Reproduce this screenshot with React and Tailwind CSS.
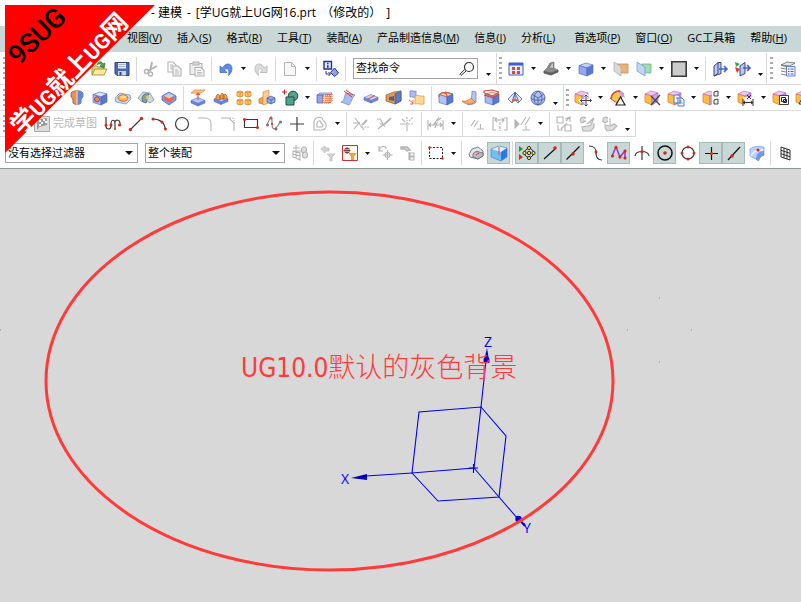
import React from 'react';

const MENUS = [
  ['视图', 'V'], ['插入', 'S'], ['格式', 'R'], ['工具', 'T'], ['装配', 'A'], ['产品制造信息', 'M'],
  ['信息', 'I'], ['分析', 'L'], ['首选项', 'P'], ['窗口', 'O'], ['GC工具箱', ''], ['帮助', 'H'],
];

const Cube = ({ top = '#c3d2fa', left = '#8fa8f0', right = '#5a78d0', line = '#4a62b0' }) => (
  <g stroke={line} strokeWidth=".6" strokeLinejoin="round">
    <path d="M1 4.500 8 2l7 2-6 3z" fill={top} />
    <path d="M1 4.500 9 7v8l-8-2.500z" fill={left} />
    <path d="M9 7l6-3v8l-6 3z" fill={right} />
  </g>
);

const SyncCube = () => (
  <g strokeLinejoin="round" strokeWidth=".7">
    <path d="M0 4 6 1l7 2-6 3z" fill="#eec4f5" stroke="#b27cc4" />
    <path d="M0 4l7 2v9l-7-3z" fill="#ffbe3c" stroke="#dd6a45" />
    <path d="M7 6l6-3v8l-6 4z" fill="#d3a0e6" stroke="#a06bb8" />
  </g>
);

const Slab = ({ y = 0, fill = '#b4c6f8' }) => (
  <g transform={`translate(0 ${y})`} stroke="#5870c4" strokeWidth=".6" strokeLinejoin="round">
    <path d="M1 9l7-3 7 3-7 3z" fill={fill} />
    <path d="M1 9v2.500l7 3V12zM15 9v2.500l-7 3V12z" fill="#6a86de" />
  </g>
);

const Dot = ({ x, y, r = 1.5 }) => <circle cx={x} cy={y} r={r} fill="#d6261c" stroke="none" />;

const ink = { fill: 'none', stroke: '#3c3c3c', strokeWidth: 1.2 };
const dim = { fill: 'none', stroke: '#b4b4b4', strokeWidth: 1.1 };

const ICONS = {
  open: <g stroke="#8d8334" strokeWidth=".8"><path d="M1 14V5h5l1 1h6v3" fill="#e6d66d" /><path d="M1 14 4 8h12l-3 6z" fill="#f8ec9c" /><path d="M6 4c1-4 5-4 6-1l2-1-1 5-4-2 1.500-1C10 2.500 8 2 6 4z" fill="#45a845" stroke="#2d7b2d" /></g>,
  save: <g><path d="M1 1.500h14v13H3l-2-2z" fill="#4a68b0" stroke="#2f4580" /><path d="M4 2h8v5.500H4z" fill="#e9edf5" /><path d="M4.500 3.500h7M4.500 5.500h7" stroke="#9aa6bf" strokeWidth=".8" /><path d="M4 10h8v4.500H4z" fill="#cfd5e0" /><path d="M5.500 11h2v3.500h-2z" fill="#2f4580" /></g>,
  cut: <g {...dim}><path d="M9 1 7 10M14 5 5 10" strokeWidth="2" /><circle cx="3.500" cy="10.500" r="2" strokeWidth="1.500" /><circle cx="7.500" cy="13" r="2" strokeWidth="1.500" /></g>,
  copy: <g {...dim}><path d="M2 1h5l3 3v7H2zM4 4h3M4 6h3M4 8h3" /><path d="M7 5h5l3 3v7H7z" fill="#f1f1f1" /><path d="M9 9h3M9 11h4M9 13h4" strokeWidth=".9" /></g>,
  paste: <g {...dim}><path d="M1 2.500h12v11H1z" fill="#eee" /><path d="M4 1h6v3H4z" fill="#d7d7d7" /><path d="M6 6.500h6l3 3V15H6z" fill="#f7f7f7" /><path d="M8 9.500h4M8 11.500h5M8 13h5" strokeWidth=".9" /></g>,
  undo: <path d="M2 5v6.500h7L6.500 9C9 6.500 12 7.500 10.500 14.500c5-4 4.500-11.500-.5-11.500C7.500 3 6 4.500 4.500 7z" fill="#5d8ce0" stroke="#3b66b8" strokeWidth=".7" />,
  redo: <path d="M14 5v6.500H7L9.500 9C7 6.500 4 7.500 5.500 14.500.5 10.500 1 3 6 3c2.500 0 4 1.500 5.500 4z" fill="#dcdcdc" stroke="#b9b9b9" strokeWidth=".9" />,
  doc: <path d="M2.500 1.500h7l4 4v9h-11zM9.500 1.500v4h4" fill="#f8f8f8" stroke="#b4b4b4" />,
  pick: <g><path d="M1 .5h7.500V8H1z" fill="#dfe6ff" stroke="#26328c" strokeWidth="1.400" /><path d="M4.800 2v1.300M4.800 4.200v2.600" stroke="#26328c" strokeWidth="1.600" /><path d="M3 10v3h4M5.500 11 7.500 13l-2 2" fill="none" stroke="#26328c" /><path d="M11.500 7l4 5-4 3.500-4-4z" fill="#8fa2e8" stroke="#26328c" /></g>,
  win: <g><path d="M1 2h14v12H1z" fill="#e9effc" stroke="#3d5fc4" /><path d="M1 2h14v2.500H1z" fill="#3560d8" /><path d="M4 6h3v3H4zM9 6h3v3H9zM4 10h3v3H4zM9 10h3v3H9z" fill="#e8452f" /></g>,
  shadow: <g stroke="#666" strokeWidth=".6"><path d="M1 10l3-3 3-5 4-1v6l4 2v2l-7 3-7-2z" fill="#8d8d8d" /><path d="M1 10l7 2 7-3v2l-7 3-7-2z" fill="#5e5e5e" /><path d="M6 7l3-5 1.500-.5v6z" fill="#c6c6c6" /></g>,
  cube: <Cube />,
  orange: <g strokeWidth=".8"><path d="M3 3h12v9H6z" fill="#e9b277" stroke="#c68d50" /><path d="M1 1l7 5v9l-7-5z" fill="#d9d9d9" stroke="#b0b0b0" /></g>,
  teal: <g strokeWidth=".8"><path d="M6 3h9v9H8z" fill="#a2dbb4" stroke="#6cb684" /><path d="M1 1l8 5v9l-8-5z" fill="#c0d3f2" stroke="#7f99cf" /></g>,
  square: <path d="M.8.8h14.400v14.400H.8z" fill="#cbcbcb" stroke="#3b3b3b" strokeWidth="1.600" />,
  clipA: <g><path d="M2 5l4-3.500v11L2 15zM6 1.500h3v11L2 15" fill="#b9c8f4" stroke="#3a4878" /><path d="M7 8h8M12 5l3 3-3 3" fill="none" stroke="#3c5fdc" strokeWidth="1.600" /></g>,
  clipB: <g><path d="M5 5l5-3.500v11L5 15z" fill="#b9c8f4" stroke="#3a4878" /><path d="M0 1l5 2-4 3z" fill="#2da84e" /><path d="M0 6l5 2-3 4z" fill="#d93b2a" /><path d="M8 7h7M12 4l3 3-3 3" fill="none" stroke="#3c5fdc" strokeWidth="1.600" /></g>,
  layers: <g strokeWidth=".8"><path d="M1 4l6-3 8 1-5 3zM1 7l5 1M1 10l5 1M1 13l5 1M1 4v0l6 2" fill="#dfeae2" stroke="#5b6b63" /><path d="M6.500 5.500h8.500v9.500H6.500z" fill="#eef2ff" stroke="#4a63c8" /><path d="M8 8h1.500M10.500 8h3M8 10.500h1.500M10.500 10.500h3M8 13h1.500M10.500 13h3" stroke="#4a63c8" strokeWidth="1.200" /></g>,

  revolve: <g><path d="M2 3c2-3 10-3 12 0v4c-2 1-2 3-2 6-2 2-6 2-8 0 0-3 0-5-2-6z" fill="#ea9050" stroke="#8a5a44" strokeWidth=".8" /><path d="M8 1v13.500c3 0 4-1.500 4-1.500 0-3 0-5 2-6V3C12 1 8 1 8 1z" fill="#6386dc" /><path d="M8 1v14" stroke="#fff" strokeWidth=".8" /></g>,
  hole: <g><Cube top="#dbe4ff" left="#a5b6f5" /><circle cx="5" cy="9.300" r="2.500" fill="#e98a60" stroke="#7d3a30" strokeWidth=".8" /></g>,
  boss: <g><path d="M0 8l5-5 10 2 1 4-5 5-10-2z" fill="#c5d9f7" stroke="#6e95d3" strokeWidth=".8" /><ellipse cx="8" cy="8" rx="5" ry="3.200" fill="#ffb24a" stroke="#d86f21" /><ellipse cx="8" cy="7" rx="3" ry="1.500" fill="#ffd896" /></g>,
  rib: <g strokeWidth=".8"><path d="M0 8 5 2l7 1 4 7-4 3-4-3-4 2z" fill="#cdd8e4" stroke="#8095a8" /><path d="M4 9c0-4 3-6 7-5L8 13l-3-1z" fill="#8a9ea0" stroke="#4c6365" /><path d="M8 6l3-1-2 6z" fill="#f0d25b" /></g>,
  pocket: <g><path d="M1 6l7-4 7 4v4l-7 5-7-5z" fill="#7f9bec" stroke="#415cac" strokeWidth=".7" /><path d="M3 5.500 8 3l5 2.500-5 4z" fill="#b9caf8" /><path d="M3 6.500l5 2 5-2v3l-5 3-5-3z" fill="#ef673b" /><path d="M5 6l3 1.500L11 6 8 4.500z" fill="#f9c9a4" /></g>,
  extrude: <g><Slab y={1.5} /><path d="M1 3l4-3h10l-4 3z" fill="#ffc98a" stroke="#d18235" strokeWidth=".7" /><path d="M8 3v7M6 5l2-2 2 2" fill="none" stroke="#e0603a" strokeWidth="1.200" /></g>,
  emboss: <g><Slab y={0} /><path d="M3 9V6l2-2 2 2v4zM7 9V6l2-3 2 2v4zM10 9V5l2-1 2 2v3z" fill="#f4a244" stroke="#a95b20" strokeWidth=".7" /></g>,
  pattern: <g fill="#ffc65e" stroke="#d98a30" strokeWidth=".8"><path d="M1 2l3-1 3 1v4L4 7 1 6zM9 2l3-1 3 1v4l-3 1-3-1zM1 10l3-1 3 1v4l-3 1-3-1zM9 10l3-1 3 1v4l-3 1-3-1z" /><path d="M1 2l3 1 3-1M4 3v4M9 2l3 1 3-1M12 3v4M1 10l3 1 3-1M4 11v4M9 10l3 1 3-1M12 11v4" /></g>,
  mirror: <g strokeWidth=".7"><path d="M0 9l4-2 3 1v4l-3 2-4-1z" fill="#efa755" stroke="#b6692a" /><path d="M4 2l6-2v13l-6 2z" fill="#f9cd91" stroke="#d28a3d" /><path d="M8 8l4-2 4 2v4l-4 2-4-2z" fill="#8fa8f0" stroke="#4058a6" /><path d="M8 8l4 2 4-2M12 10v4" fill="none" stroke="#4058a6" /></g>,
  unite: <g><circle cx="11" cy="6" r="4.800" fill="#4fa48f" stroke="#24483f" /><path d="M4 7h8v8H4z" fill="#4fa48f" stroke="#24483f" /><path d="M0 2h5M2.500-.5v5" stroke="#d6261c" strokeWidth="1.200" /></g>,
  trim: <g><path d="M0 5l3-2h12l-2 2z" fill="#cdd8fb" stroke="#6d78b5" strokeWidth=".7" /><path d="M0 5h6v8H0z" fill="#8fa6f0" stroke="#45569d" strokeWidth=".7" /><path d="M6 5h7v8H6zM13 5l2-2v8l-2 2z" fill="#f6d08c" stroke="#d64a37" strokeDasharray="1 1" /><path d="M9 4v9M11 4v9" stroke="#d64a37" strokeDasharray="1 1" /></g>,
  split: <g><path d="M1 12c4-1 3-6 5-9l9 2c-3 2-3 7-6 10z" fill="#aabdf2" stroke="#6d82c0" strokeWidth=".7" /><path d="M4 1l8 6M6 0l7 5" stroke="#d7352c" /></g>,
  face: <g><Slab y={-1.5} fill="#ccd8fc" /><path d="M5 9l7-3.500" stroke="#e0554a" strokeWidth="1.200" /></g>,
  shell: <g><path d="M0 5l8-3 7-1v10l-6 3-9-3z" fill="#e29b55" stroke="#8d5a30" strokeWidth=".7" /><path d="M9 4l6-3v10l-6 3z" fill="#5d7cc0" stroke="#3d5594" strokeWidth=".7" /><path d="M3 7l5-1v5l-5-1z" fill="#5b5f7c" /></g>,
  offset: <g strokeWidth=".8"><path d="M1 1c2-1 4 1 6 0v6c-2 1-4-1-6 0z" fill="#a9bcf4" stroke="#6d82c0" /><path d="M6 6c3-2 6 1 9 0v8c-3 1-6-1-9 0z" fill="#ffd796" stroke="#d99a40" /><path d="M0 10l4 3M4 10v4H1" fill="none" stroke="#d44830" /></g>,
  blend: <g><Cube top="#ffd891" left="#b4c4f6" /><path d="M1 7V5c3-4 8-3 8 2" fill="none" stroke="#df4d35" strokeWidth="1.200" /><path d="M7 2l7 2" stroke="#df4d35" /></g>,
  sweep: <g strokeWidth=".7"><path d="M11 1l4 1v10c-3 3-6 3-9 2 4-3 5-7 5-13z" fill="#b3c4f2" stroke="#6d7fb9" /><path d="M1 11c4 1 7-1 9-3l4 4c-4 3-9 3-13-1z" fill="#f6b068" stroke="#c3622a" /></g>,
  chamfer: <g><Cube top="#ffe095" left="#a5b8f4" /><path d="M0 3l9 3 6-4M0 5l9 3 6-4M0 3V1l8-1 7 2" fill="none" stroke="#dd4632" strokeWidth="1.100" /></g>,
  draft: <g fill="none"><path d="M8 2 1 9l4 4 3-3 3 3 4-4z" fill="#e2ebfc" stroke="#5474be" strokeWidth=".9" /><path d="M8 2v9M8 3 5 12M8 3l4 9" stroke="#3c4b7d" strokeWidth=".8" /><path d="M5 10h6" stroke="#dc5b37" strokeWidth="1.600" /></g>,
  sphere: <g fill="none" stroke="#3c579c" strokeWidth=".8"><circle cx="8" cy="8" r="7" fill="#aebff0" /><path d="M8 8v7M2.500 4.500 8 8l5.500-3.500M8 1C5 3 4 6 4 9s2 5 4 6M8 1c3 2 4 5 4 8s-2 5-4 6M1 8c2 3 12 3 14 0" /></g>,

  move: <g><SyncCube /><path d="M11 5v11M5.500 10.500h11M9.500 6.500 11 5l1.500 1.500M9.500 14.500 11 16l1.500-1.500M7 9l-1.500 1.500L7 12M15 9l1.500 1.500L15 12" fill="none" stroke="#fff" strokeWidth="3" /><path d="M11 5v11M5.500 10.500h11M9.500 6.500 11 5l1.500 1.500M9.500 14.500 11 16l1.500-1.500M7 9l-1.500 1.500L7 12M15 9l1.500 1.500L15 12" fill="none" stroke="#444" /></g>,
  pull: <g><path d="M1 9c0-5 4-8 9-8l4 3-7 9z" fill="#ffc84a" stroke="#cc493b" /><path d="M8 1l5 1 2 6-5-3z" fill="#d49ae5" /><path d="M1 9c0-5 4-8 9-8" fill="none" stroke="#cc493b" strokeWidth="1.500" /><path d="M10.500 7l4.500 8H6z" fill="#fff" stroke="#222" strokeWidth="1.200" /></g>,
  del: <g><SyncCube /><path d="M6 6l9 9M15 5 6 15" stroke="#444" strokeWidth="1.300" /></g>,
  syncCopy: <g><SyncCube /><path d="M6 5h5l1 2v6H6zM10 8h4l2 2v6h-6z" fill="#f1f5ff" stroke="#5c7bc0" /><path d="M8 8h2M11.500 11h2M11.500 13h3" stroke="#3c5796" strokeWidth=".8" /></g>,
  groupFace: <g><SyncCube /><path d="M9 0h7v16H9z" fill="#fff" /><path d="M11 2l4-1v5h-4zM11 10l4-1v5h-4z" fill="#f2f2f2" stroke="#444" /></g>,
  dimension: <g><SyncCube /><path d="M5 7h11v9H5z" fill="#fff" fillOpacity=".8" /><path d="M5 9v7M15 9v7M5 12.500h10M7 11 5 12.500 7 14M13 11l2 1.500-2 1.500M9 5l4 4M13 5 9 9" fill="none" stroke="#333" /></g>,
  groupBox: <g><SyncCube /><path d="M6.500 5.500h9v9h-9z" fill="#f7f7ff" stroke="#444" /><path d="M8.500 7.500h4v4h-4zM10.500 9.500h3v3h-3z" fill="none" stroke="#223" /></g>,
  cross: <g><SyncCube /><path d="M8 5l6 9H3z" fill="#fff" stroke="#333" /></g>,

  profile: <g {...ink}><path d="M1 1v9c0 4 5 4 5 0V8c0-5 4-5 4 0v5M10 6c1-3 5-2 5 1v3" /><Dot x={1} y={9} /><Dot x={6} y={9} /><Dot x={10} y={13} r={1} /><Dot x={14.500} y={9} /></g>,
  line: <g {...ink}><path d="M3 13 13 3" /><Dot x={2.500} y={13.500} r={1.7} /><Dot x={13.500} y={2.500} r={1.700} /></g>,
  arc: <g {...ink}><path d="M2 3c7 0 12 4 12 10" /><Dot x={2} y={3} /><Dot x={11} y={6} /><Dot x={14.500} y={13} /></g>,
  circle: <circle cx="8" cy="8" r="6.500" {...ink} />,
  fillet: <path d="M1 2h7c5 0 6 3 6 6v7" {...dim} />,
  corner: <g {...dim}><path d="M1 2h8l5 5v8" /><path d="M10 2h4v5" strokeDasharray="1 1" /></g>,
  rect: <g {...ink}><path d="M1.500 3.500h13v8h-13z" /><Dot x={1.500} y={3.500} /><Dot x={14.500} y={11.500} /></g>,
  spline: <g fill="none" stroke="#888" strokeWidth="1.200"><path d="M1 9C5-1 6-1 6 7s3 8 8-1" /><g fill="#a06060" stroke="none"><circle cx="1.500" cy="9" r="1.500" /><circle cx="5" cy="2" r="1.500" /><circle cx="10" cy="13" r="1.500" /><circle cx="14.500" cy="6" r="1.500" /></g><Dot x={6} y={8} r={1} /></g>,
  point: <path d="M8 1v14M1 8h14" {...ink} />,
  offsetCurve: <g {...dim}><path d="M2 14V6c1-6 8-6 9-2l3 4c1 3-1 6-4 6z" /><path d="M5 11V7c1-3 4-3 4 0l2 2c0 2-1 2-2 2z" /></g>,
  trimA: <g {...dim}><path d="M2 2l9 12M1 13 7 6M0 7h6" /><path d="M9 9l5-5" strokeWidth="2" /><path d="M8 11h8" strokeDasharray="2 1" /></g>,
  trimB: <g {...dim}><path d="M1 3h3l5 8M2 13 14 3M4 8h6" /><path d="M10 7l5-5" strokeWidth="1.600" /></g>,
  trimC: <g {...dim}><path d="M8 6v9M1 8h7M3 3l3 3" /><path d="M9 8h6M8 1v4M10 5l4-4" strokeDasharray="2 1" /></g>,
  dimQ: <g {...dim}><path d="M0 4v10M15 4v10M0 9h15M3 7 1 9l2 2M12 7l2 2-2 2M7 12l2-5-3 1 5-7M9 5l4-3" /></g>,
  constrain: <g {...dim}><path d="M2 10l4-6M5 11l4-6M8 13h7M11.500 13V8" /></g>,
  autoC: <g {...dim}><path d="M4 2H1v12h3M12 2h3v12h-3" /><path d="M8 6v9" strokeDasharray="3 1" /><path d="M3 4h9M5 2 3 4l2 2M10 2l2 2-2 2" /></g>,
  showC: <g {...dim}><path d="M0 4l4 4-4 4z" fill="#b4b4b4" /><path d="M6 9l5-8M10 9l5-8M7 14h8M11 14v-4" /></g>,
  box1: <g {...dim}><path d="M1 1h6v6H1zM9 9h6v6H9z" /><path d="M5 13l6-6M9 3l5-2v5M2 9v5h5M10 5l4-4" /></g>,
  box2: <g {...dim}><path d="M7 2C2-1-1 5 3 7l4-2H4M8 8l7-6-3 7-3 1-6 1 1 4h8l3-4V7" fill="#ddd" /></g>,
  box3: <g {...dim}><path d="M6 2C1-1-1 5 3 7l3-2M8 2v7M3 9l5 1 4-2 3 2-4 4-6 1-2-3z" fill="#ddd" /></g>,
  finish: <g><path d="M.5.5h15v15H.5z" fill="#ddd" stroke="#aaa" /><path d="M3 4l10-2v7L5 11l-2 3z" fill="#999" /><path d="M5 4h2v2H5zM9 3h2v2H9zM7 6h2v2H7zM11 5h2v2h-2zM5 8h2v2H5z" fill="#fff" /></g>,

  assy: <g {...dim}><path d="M1 6h8M1 6v6l7 3V8L1 6M4 7v6M1 9l7 2M4 0v5M1 3h7" /><ellipse cx="12" cy="5" rx="2.500" ry="3" fill="#e2e2e2" /><ellipse cx="13" cy="10" rx="2.500" ry="3" fill="#e2e2e2" /></g>,
  filterOff: <g fill="#d2d2d2" stroke="#c0c0c0" strokeWidth=".8"><path d="M1 4l4-3v2h4v3H5v2zM7 9h8l-3 3v4h-2v-4z" /></g>,
  filter: <g><path d="M.5.5h15v15H.5z" fill="#fff8ec" stroke="#c9303e" /><path d="M5 2v7M1.500 5.500h7M3 3.500h4v4H3z" fill="none" stroke="#673b3b" strokeWidth=".9" /><path d="M7 8.500h7l-2.500 3v3h-2v-3z" fill="#f3aa2e" stroke="#cb7b19" strokeWidth=".6" /></g>,
  reset: <g {...dim}><path d="M2 1v5h4M2 5c2-5 7-4 7-1M10.500 5v10M5.500 10h10" /><circle cx="10.500" cy="10" r="2.500" /></g>,
  tree: <g {...dim}><path d="M1 2h6l3 3-3 1-2-2H1z" fill="#d6d6d6" strokeWidth="1.500" /><path d="M9 7v8M10 8h4v3h-4zM10 12h4v3h-4z" /></g>,
  marquee: <g><path d="M1.500 2.500h13v11h-13z" fill="none" stroke="#222" strokeDasharray="2 1.500" strokeWidth="1.100" /><Dot x={1.500} y={2.500} r={1.2} /><Dot x={14.500} y={13.500} r={1.2} /></g>,
  ghost: <g stroke="#666" strokeWidth=".8"><path d="M1 9l3-5 6-2 5 4v5l-5 3-8-2z" fill="#e2e2ea" /><path d="M5 12c-1-4 3-7 6-5l4 1v3l-5 3z" fill="#b9b9c4" /><path d="M8 10l3-2" stroke="#c22" /></g>,
  shade: <g><path d="M0 4l8-3 8 2-6 4z" fill="#d9efff" /><path d="M0 4l10 3v9L0 12z" fill="#6cc0f8" /><path d="M10 7l6-4v9l-6 4z" fill="#2a78e4" /><path d="M0 4l8-3 8 2v9l-6 4L0 12z" fill="none" stroke="#5a80c8" strokeWidth=".7" /><path d="M8 2v8" stroke="#e34c3a" /></g>,

  snap: <g><circle cx="10" cy="8" r="4.500" fill="none" stroke="#222" /><path d="M0 1l4 3-4 3z" fill="#199a34" /><path d="M0 9l4 3-4 3z" fill="#d6261c" /><g fill="#ffe04a" stroke="#222" strokeWidth=".9"><circle cx="10" cy="8" r="1.700" fill="#ffd42e" /><circle cx="10" cy="3" r="1.600" /><circle cx="10" cy="13" r="1.600" /><circle cx="5.500" cy="8" r="1.600" /><circle cx="14.500" cy="8" r="1.600" /></g></g>,
  endPt: <g {...ink} stroke="#111"><path d="M2 14 13 4" /><Dot x={13} y={3} r={1.800} /></g>,
  midPt: <g {...ink} stroke="#111"><path d="M1.500 14.500l13-13" /><Dot x={8} y={9} r={1.800} /></g>,
  ctrlPt: <g {...ink}><path d="M1 1c6 0 7 3 7 7s2 7 6 7" /><Dot x={8} y={7} /></g>,
  poly: <g fill="none"><path d="M1 11 5 2l4 10 5-6v7" stroke="#8f36cf" strokeWidth="1.500" /><Dot x={1.500} y={11} r={1.600} /><Dot x={5} y={2.500} r={1.600} /><Dot x={9} y={12} r={1.600} /><Dot x={14} y={6} r={1.600} /><Dot x={14} y={13} r={1.600} /></g>,
  inter: <g {...ink}><path d="M8 1v14M1 11c1-6 13-6 14 0" /><Dot x={8} y={6.500} /></g>,
  center: <g {...ink} stroke="#111" strokeWidth="1.500"><circle cx="8" cy="8" r="7" /><Dot x={8} y={8} r={1.8} /></g>,
  quad: <g {...ink}><circle cx="8" cy="8" r="6" /><Dot x={8} y={2} /><Dot x={8} y={14} /><Dot x={2} y={8} /><Dot x={14} y={8} /></g>,
  exist: <g {...ink} stroke="#111"><path d="M8.500 2v13M2 8.500h13" /><Dot x={8.5} y={8.5} r={1.600} /></g>,
  onCurve: <g {...ink} stroke="#111"><path d="M2 15 14 2" /><Dot x={6} y={11} r={1.800} /></g>,
  onFace: <g><path d="M1 4c4-3 9-3 14-2v8c-3 0-5 2-6 5L1 11z" fill="#b9d0fb" stroke="#7e9fdc" strokeWidth=".8" /><path d="M7 15c0-6 3-9 8-9v5c-3 0-4 2-5 5z" fill="#7398e2" /><path d="M2 11c2-5 6-6 12-6" fill="none" stroke="#eef4ff" strokeWidth="1.500" /><Dot x={9} y={5} r={1.600} /></g>,
  grid: <path d="M4 2l9 3v10l-9-3zM4 5.300l9 3M4 8.700l9 3M7 3v10M10 4v10" fill="none" stroke="#333" />,
};

const Tool = ({ name, on }) => (
  <button
    type="button"
    aria-label={name}
    className={`flex h-[22px] w-[23px] shrink-0 items-center justify-center border ${on ? 'border-[#a3bcb8] bg-[#c9d8d6]' : 'border-transparent'}`}
  >
    <svg viewBox="0 0 16 16" className="h-4 w-4 shrink-0 overflow-visible">{ICONS[name]}</svg>
  </button>
);

const Arrow = ({ low }) => (
  <button type="button" aria-label="更多" className={`flex h-[22px] w-3 shrink-0 justify-center ${low ? 'items-end pb-1' : 'items-center'}`}>
    <svg viewBox="0 0 5 3" className="h-[3px] w-[5px]"><path d="M0 0h5L2.500 3z" fill="#111" /></svg>
  </button>
);

const Sep = ({ tight }) => (
  <span className={`h-6 w-px shrink-0 bg-[#d9d9d9] ${tight ? 'mx-0.5' : 'ml-[3px] mr-0.5'}`} />
);

const Grip = () => (
  <span className="my-1 w-[3px] shrink-0 self-stretch bg-[repeating-linear-gradient(#a9a9a9_0_2px,transparent_2px_5px)]" />
);

const Edge = () => <span className="w-px shrink-0 self-stretch bg-[#d9d9d9]" />;

// "," drop-down arrow, "_" low overflow arrow, "|" separator, "*" pressed tool
const Tools = ({ list, tight }) => list.split(' ').map((t, i) => {
  if (t === '|') return <Sep key={i} tight={tight} />;
  if (t === ',') return <Arrow key={i} />;
  if (t === '_') return <Arrow key={i} low />;
  return <Tool key={i} name={t.replace('*', '')} on={t[0] === '*'} />;
});

const Filter = ({ label, option, className }) => (
  <label className={`relative flex shrink-0 items-center ${className}`}>
    <select aria-label={label} className="h-5 w-full appearance-none border border-[#a5a5a5] bg-white pl-0.5 text-[11px] leading-4 text-black">
      <option>{option}</option>
    </select>
    <svg viewBox="0 0 8 4" className="pointer-events-none absolute right-[5px] h-1 w-2"><path d="M0 0h8L4 4z" fill="#111" /></svg>
  </label>
);

const Banner = () => (
  <svg viewBox="0 0 155 155" className="pointer-events-none absolute left-0 top-0 h-[155px] w-[155px]">
    <path d="M5 5h150L5 153z" fill="#fe0000" />
    <text transform="translate(19 66) rotate(-44)" fontSize="27" fontWeight="500" fontFamily="Roboto, sans-serif" fill="#000">9SUG</text>
    <text transform="translate(21 136) rotate(-46)" fontSize="25" fontWeight="700" fontFamily="Roboto, 'Noto Sans CJK SC', sans-serif" fill="#fff">
      学<tspan fontSize="21">UG</tspan>就上<tspan fontSize="21">UG</tspan>网
    </text>
  </svg>
);

const Viewport = () => (
  <main className="relative min-h-[433px] flex-1 overflow-hidden bg-[#d8d8d8]">
    <svg viewBox="0 0 801 433" className="absolute left-0 top-0 h-[433px] w-[801px]">
      <g fill="none" stroke="#0000f0" strokeWidth="1.100">
        <path d="M412 304 419 243 481 238 474 299z" />
        <path d="M481 238 506 267 499 328 438 332 412 304" />
        <path d="M474 299 499 328 518 350M481 238 486 192M412 304 366 307M469 299h9M473.500 295v9" />
      </g>
      <path d="M351 309l16-4v6z" fill="#0000b8" />
      <path d="M487 179l-3.500 15h6z" fill="#0000b8" />
      <circle cx="486.500" cy="191" r="3" fill="#0000c8" />
      <circle cx="518.500" cy="350" r="3.200" fill="#0000d8" />
      <path d="M519 350l6 7" stroke="#0000b8" strokeWidth="2" />
      <g fill="#0000f0" fontFamily="'Open Sans', sans-serif" fontSize="14">
        <text x="484" y="178">Z</text>
        <text x="341" y="315">X</text>
        <text x="523" y="364">Y</text>
      </g>
      <ellipse cx="329.500" cy="212" rx="283.500" ry="189" fill="none" stroke="#ff3a3a" strokeWidth="3" />
      <path d="M0 161h1M659 129h1M627 161h1M691 161h1M659 193h1" stroke="#8a8a8a" />
    </svg>
    <p className="absolute left-[241px] top-[184px] flex items-baseline whitespace-nowrap font-['Open_Sans','Noto_Sans_CJK_SC',sans-serif] text-[27px] font-light leading-7 text-[#ff3a3a]">
      <span className="font-['DejaVu_Sans_Condensed','DejaVu_Sans',sans-serif] text-[26px] font-normal">UG10.0</span>默认的灰色背景
    </p>
  </main>
);

export default function App() {
  return (
    <div className="relative flex min-h-screen flex-col overflow-hidden bg-white font-['Open_Sans','Noto_Sans_CJK_SC',sans-serif] text-black">
      <header className="flex h-[26px] items-center gap-[5px] whitespace-nowrap pl-[151px] text-xs">
        <span>- 建模</span>
        <span>-</span>
        <span>[学UG就上UG网16.prt</span>
        <span>（修改的）</span>
        <span>]</span>
      </header>

      <nav className="flex h-[26px] items-center gap-[15px] overflow-hidden bg-[#c9d8d6] pb-0.5 pl-[127px] text-[11px]">
        {MENUS.map(([name, key]) => (
          <button key={name} type="button" className={`shrink-0 whitespace-nowrap ${name === '首选项' ? 'ml-1' : ''}`}>
            {name}{key && <>(<u>{key}</u>)</>}
          </button>
        ))}
      </nav>

      <div className="flex h-[33px] items-center overflow-hidden border-b border-[#d9d9d9] pl-[3px] pt-px">
        <Grip />
        <div className="ml-[81px] flex items-center">
          <Tools list="open save | cut copy paste | undo , redo | doc , | pick |" />
        </div>
        <label className="ml-[5px] flex h-[21px] w-[125px] shrink-0 items-center border border-[#a5a5a5] bg-white">
          <input aria-label="查找命令" defaultValue="查找命令" className="w-full min-w-0 bg-transparent pl-0.5 text-[11px] outline-none" />
          <svg viewBox="0 0 16 16" className="mr-0.5 h-4 w-4 shrink-0" fill="none" stroke="#333">
            <circle cx="10" cy="6" r="4.500" strokeWidth="1.200" />
            <path d="M7 10l-5 4.500L.8 13.300 5.700 8.500" />
          </svg>
        </label>
        <div className="ml-1 flex items-center gap-0.5 self-stretch">
          <Arrow low /><Edge /><Grip />
        </div>
        <div className="ml-0.5 flex items-center">
          <Tools list="win , shadow , cube , orange teal , square , | clipA clipB _" />
        </div>
        <Edge />
        <span className="ml-[3px] flex self-stretch"><Grip /></span>
        <span className="ml-[3px]"><Tool name="layers" /></span>
      </div>

      <div className="flex h-[26px] items-center overflow-hidden border-b border-[#d9d9d9] pl-[3px]">
        <Grip />
        <div className="ml-[59px] flex items-center">
          <Tools list="revolve hole boss rib pocket | extrude emboss pattern mirror unite , trim split face shell offset | blend sweep chamfer draft sphere _" />
        </div>
        <span className="ml-0.5 flex gap-0.5 self-stretch"><Edge /><Grip /></span>
        <div className="ml-0.5 flex items-center">
          <Tools list="move , pull , del syncCopy , groupFace , dimension , groupBox cross" />
        </div>
      </div>

      <div className="flex h-[26px] w-[636px] items-center border-b border-r border-[#d9d9d9] pl-[3px]">
        <Grip />
        <span className="ml-6"><Tool name="finish" /></span>
        <span className="w-12 shrink-0 whitespace-nowrap text-[11px] text-[#b8b8b8]">完成草图</span>
        <Tools list="profile line arc circle fillet corner rect spline point offsetCurve , | trimA trimB trimC | dimQ , | constrain autoC showC , | box1 box2 box3 _" />
      </div>

      <div className="flex h-8 items-center overflow-hidden border-b border-[#8b9594] pl-[5px] pt-px">
        <Filter label="类型过滤器" option="没有选择过滤器" className="w-[133px]" />
        <Filter label="选择范围" option="整个装配" className="ml-[7px] w-[140px]" />
        <div className="ml-[3px] flex items-center">
          <Tools tight list="assy | filterOff" />
        </div>
        <div className="-ml-px flex items-center">
          <Tools tight list="filter , reset tree | marquee , | ghost *shade | *snap *endPt *midPt ctrlPt *poly inter *center quad *exist *onCurve onFace | grid" />
        </div>
      </div>

      <Viewport />
      <Banner />
    </div>
  );
}
